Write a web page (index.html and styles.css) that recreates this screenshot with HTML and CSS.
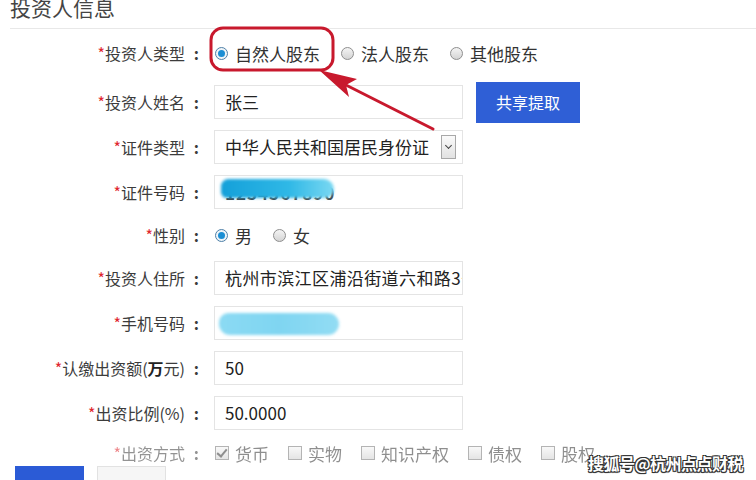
FILE: index.html
```html
<!DOCTYPE html>
<html lang="zh-CN">
<head>
	<meta charset="UTF-8">
	<title>投资人信息</title>
	<link rel="stylesheet" href="styles.css">
</head>
<body>
<div class="page">
	<h2 class="title">投资人信息</h2>
	<div class="form">
		<div class="row row-first">
			<span class="lbl"><i>*</i>投资人类型<em>:</em></span>
			<div class="field opts">
				<span class="opt"><span class="radio on"></span>自然人股东</span>
				<span class="opt"><span class="radio"></span>法人股东</span>
				<span class="opt"><span class="radio"></span>其他股东</span>
			</div>
		</div>
		<div class="row">
			<span class="lbl"><i>*</i>投资人姓名<em>:</em></span>
			<div class="field box">张三</div>
			<a href="javascript:;" class="btn-share">共享提取</a>
		</div>
		<div class="row">
			<span class="lbl"><i>*</i>证件类型<em>:</em></span>
			<div class="field box select">中华人民共和国居民身份证<span class="caret"></span></div>
		</div>
		<div class="row">
			<span class="lbl"><i>*</i>证件号码<em>:</em></span>
			<div class="field box masked">
				<span class="under">1234567890</span>
				<span class="blot blot-id"></span>
			</div>
		</div>
		<div class="row row-radio">
			<span class="lbl"><i>*</i>性别<em>:</em></span>
			<div class="field opts">
				<span class="opt"><span class="radio on"></span>男</span>
				<span class="opt"><span class="radio"></span>女</span>
			</div>
		</div>
		<div class="row">
			<span class="lbl"><i>*</i>投资人住所<em>:</em></span>
			<div class="field box"><span class="clip">杭州市滨江区浦沿街道六和路3号</span></div>
		</div>
		<div class="row">
			<span class="lbl"><i>*</i>手机号码<em>:</em></span>
			<div class="field box masked">
				<span class="blot blot-phone"></span>
			</div>
		</div>
		<div class="row">
			<span class="lbl"><i>*</i>认缴出资额(<b>万</b>元)<em>:</em></span>
			<div class="field box">50</div>
		</div>
		<div class="row">
			<span class="lbl"><i>*</i>出资比例(%)<em>:</em></span>
			<div class="field box">50.0000</div>
		</div>
		<div class="row row-check">
			<span class="lbl"><i>*</i>出资方式<em>:</em></span>
			<div class="field opts">
				<span class="opt opt-cb"><span class="cb on"></span>货币</span>
				<span class="opt opt-cb"><span class="cb"></span>实物</span>
				<span class="opt opt-cb"><span class="cb"></span>知识产权</span>
				<span class="opt opt-cb"><span class="cb"></span>债权</span>
				<span class="opt opt-cb"><span class="cb"></span>股权</span>
			</div>
		</div>
	</div>
	<div class="actions">
		<a href="javascript:;" class="btn-save"></a>
		<a href="javascript:;" class="btn-back"></a>
	</div>

	<!-- 红色标注 -->
	<svg class="mark" width="756" height="480" viewBox="0 0 756 480">
		<rect x="211" y="28" width="122" height="42" rx="12" ry="12" fill="none" stroke="#c8192d" stroke-width="3"/>
		<line x1="433" y1="129" x2="340" y2="82" stroke="#c8192d" stroke-width="3" stroke-linecap="round"/>
		<polygon points="319,70 357,79 346,85 349,97" fill="#c8192d"/>
	</svg>

	<div class="watermark">搜狐号@杭州点点财税</div>
</div>
</body>
</html>
```

FILE: styles.css
```css
*{
	margin: 0;
	padding: 0;
	text-decoration: none;
	box-sizing: border-box;
}
body {
	background: #fff;
	font-family: "Noto Sans CJK SC", "Noto Sans", sans-serif;
	color: #333;
}
.page {
	position: relative;
	width: 756px;
	height: 480px;
	overflow: hidden;
}
.title {
	margin: -8px 0 0 10px;
	height: 37px;
	line-height: 30px;
	font-size: 21px;
	font-weight: normal;
	color: #444;
	border-bottom: 1px solid #e8e8e8;
}
.form {
	padding-top: 7px;
	display: flex;
	flex-direction: column;
	gap: 11px;
}
.row {
	display: flex;
	align-items: center;
	height: 34px;
}
.row-first {
	margin-bottom: 4px;
}
.row-radio {
	height: 30px;
}
.row-check {
	height: 24px;
	opacity: .55;
}
.lbl {
	width: 204px;
	text-align: right;
	font-size: 16px;
	color: #3c3c3c;
	white-space: nowrap;
}
.lbl i {
	font-style: normal;
	color: #e0262d;
}
.lbl b {
	color: #222;
}
.lbl em {
	display: inline-block;
	width: 19px;
	padding-right: 5px;
	text-align: right;
	font-style: normal;
	font-weight: bold;
}
.field {
	margin-left: 10px;
}
.box {
	position: relative;
	width: 249px;
	height: 34px;
	line-height: 32px;
	padding: 0 0 0 10px;
	border: 1px solid #e4e4e4;
	font-size: 17px;
	color: #222;
	white-space: nowrap;
	overflow: hidden;
}
.clip {
	display: block;
	width: 238px;
	overflow: hidden;
	letter-spacing: .4px;
}
.select .caret {
	position: absolute;
	right: 6px;
	top: 4px;
	width: 15px;
	height: 24px;
	border: 1px solid #a8a8a8;
	background: linear-gradient(#fafafa, #e2e2e2);
}
.select .caret:after {
	content: "";
	position: absolute;
	left: 4px;
	top: 7px;
	width: 4px;
	height: 4px;
	border-right: 1.5px solid #444;
	border-bottom: 1.5px solid #444;
	transform: rotate(45deg);
}
.masked .under {
	color: #444;
	font-weight: bold;
	letter-spacing: 1px;
	position: relative;
	top: 1px;
}
.blot {
	position: absolute;
	border-radius: 12px;
	filter: blur(1.5px);
}
.blot-id {
	left: 6px;
	top: 3px;
	width: 113px;
	height: 19px;
	background: linear-gradient(90deg, #14a0d9, #2fb8e6 60%, #7ad8f2);
	border-radius: 10px 14px 12px 8px;
}
.blot-phone {
	left: 4px;
	top: 6px;
	width: 120px;
	height: 22px;
	background: linear-gradient(90deg, #8bdaf3, #7fd5f1 50%, #92dcf3);
	border-radius: 12px 14px 14px 14px;
}
.opts {
	display: flex;
	align-items: center;
	font-size: 17px;
	color: #333;
}
.opt {
	display: flex;
	align-items: center;
	margin-right: 20px;
	white-space: nowrap;
}
.opt-cb {
	margin-right: 18px;
}
.radio {
	width: 13px;
	height: 13px;
	margin: 0 7px 0 1px;
	border-radius: 50%;
	border: 1px solid #8e8e8e;
	background: linear-gradient(#f4f4f4, #d4d4d4);
	position: relative;
}
.radio.on {
	border-color: #4f80a8;
	background: #eef4f8;
}
.radio.on:after {
	content: "";
	position: absolute;
	left: 2px;
	top: 2px;
	width: 7px;
	height: 7px;
	border-radius: 50%;
	background: #1b8ed4;
}
.cb {
	width: 14px;
	height: 14px;
	margin: 0 6px 0 1px;
	border: 1px solid #777;
	background: linear-gradient(#f4f4f4, #d0d0d0);
	position: relative;
}
.cb.on:after {
	content: "";
	position: absolute;
	left: 3px;
	top: 0;
	width: 4px;
	height: 8px;
	border-right: 2px solid #333;
	border-bottom: 2px solid #333;
	transform: rotate(40deg);
}
.btn-share {
	display: block;
	margin-left: 13px;
	width: 104px;
	height: 41px;
	line-height: 41px;
	text-align: center;
	font-size: 16px;
	color: #fff;
	background: #2f5fd6;
}
.actions {
	display: flex;
	padding: 1px 0 0 15px;
	gap: 13px;
}
.btn-save {
	display: block;
	width: 69px;
	height: 34px;
	background: #2b5bd6;
}
.btn-back {
	display: block;
	width: 69px;
	height: 34px;
	background: #f6f6f6;
	border: 1px solid #e2e2e2;
}
.mark {
	position: absolute;
	left: 0;
	top: 0;
	pointer-events: none;
}
.watermark {
	position: absolute;
	left: 588px;
	top: 451px;
	font-size: 16px;
	font-weight: bold;
	color: #fff;
	letter-spacing: -0.5px;
	text-shadow: 1px 1px 0 #333, -1px -1px 0 #333, 1px -1px 0 #333, -1px 1px 0 #333, 0 1px 1px #000;
}
```
